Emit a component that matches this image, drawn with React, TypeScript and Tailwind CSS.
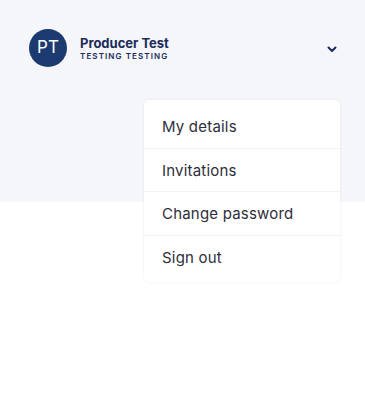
import React from "react";

export default function App() {
  const items = ["My details", "Invitations", "Change password", "Sign out"];
  return (
    <div className="w-[365px] h-[397px] bg-white relative" style={{ fontFamily: "Inter, 'Noto Sans', sans-serif" }}>
      <div className="h-[202px] bg-[#f4f6f9]">
        <div className="flex items-center pl-[29px] pr-[28px] pt-[29px]">
          <div className="w-[38px] h-[38px] rounded-full bg-[#1c3a70] flex items-center justify-center text-white text-[17px]">
            PT
          </div>
          <div className="ml-[13px] flex flex-col pt-[1px]">
            <div className="text-[13px] font-bold text-[#1c2b5a] leading-[16px]">Producer Test</div>
            <div className="text-[8px] font-semibold tracking-[1.1px] text-[#1c2b5a] leading-[11px]">TESTING TESTING</div>
          </div>
          <div className="ml-auto pt-[2px]">
            <svg width="10" height="7" viewBox="0 0 10 7" fill="none">
              <path d="M1.5 1.5 L5 5 L8.5 1.5" stroke="#1c2b5a" strokeWidth="2" strokeLinecap="round" strokeLinejoin="round" />
            </svg>
          </div>
        </div>
      </div>
      <div className="absolute left-[144px] top-[100px] w-[196px] bg-white rounded-[5px] shadow-[0_0_3px_rgba(0,0,0,0.08)] flex flex-col pt-[5px] pb-[3px]">
        {items.map((t, i) => (
          <div
            key={t}
            className={`h-[43.5px] flex items-center pl-[18px] pt-[2px] text-[15px] tracking-[0.2px] text-[#2e2e3a] ${i < items.length - 1 ? "border-b border-[#f1f3f5]" : ""}`}
          >
            {t}
          </div>
        ))}
      </div>
    </div>
  );
}
